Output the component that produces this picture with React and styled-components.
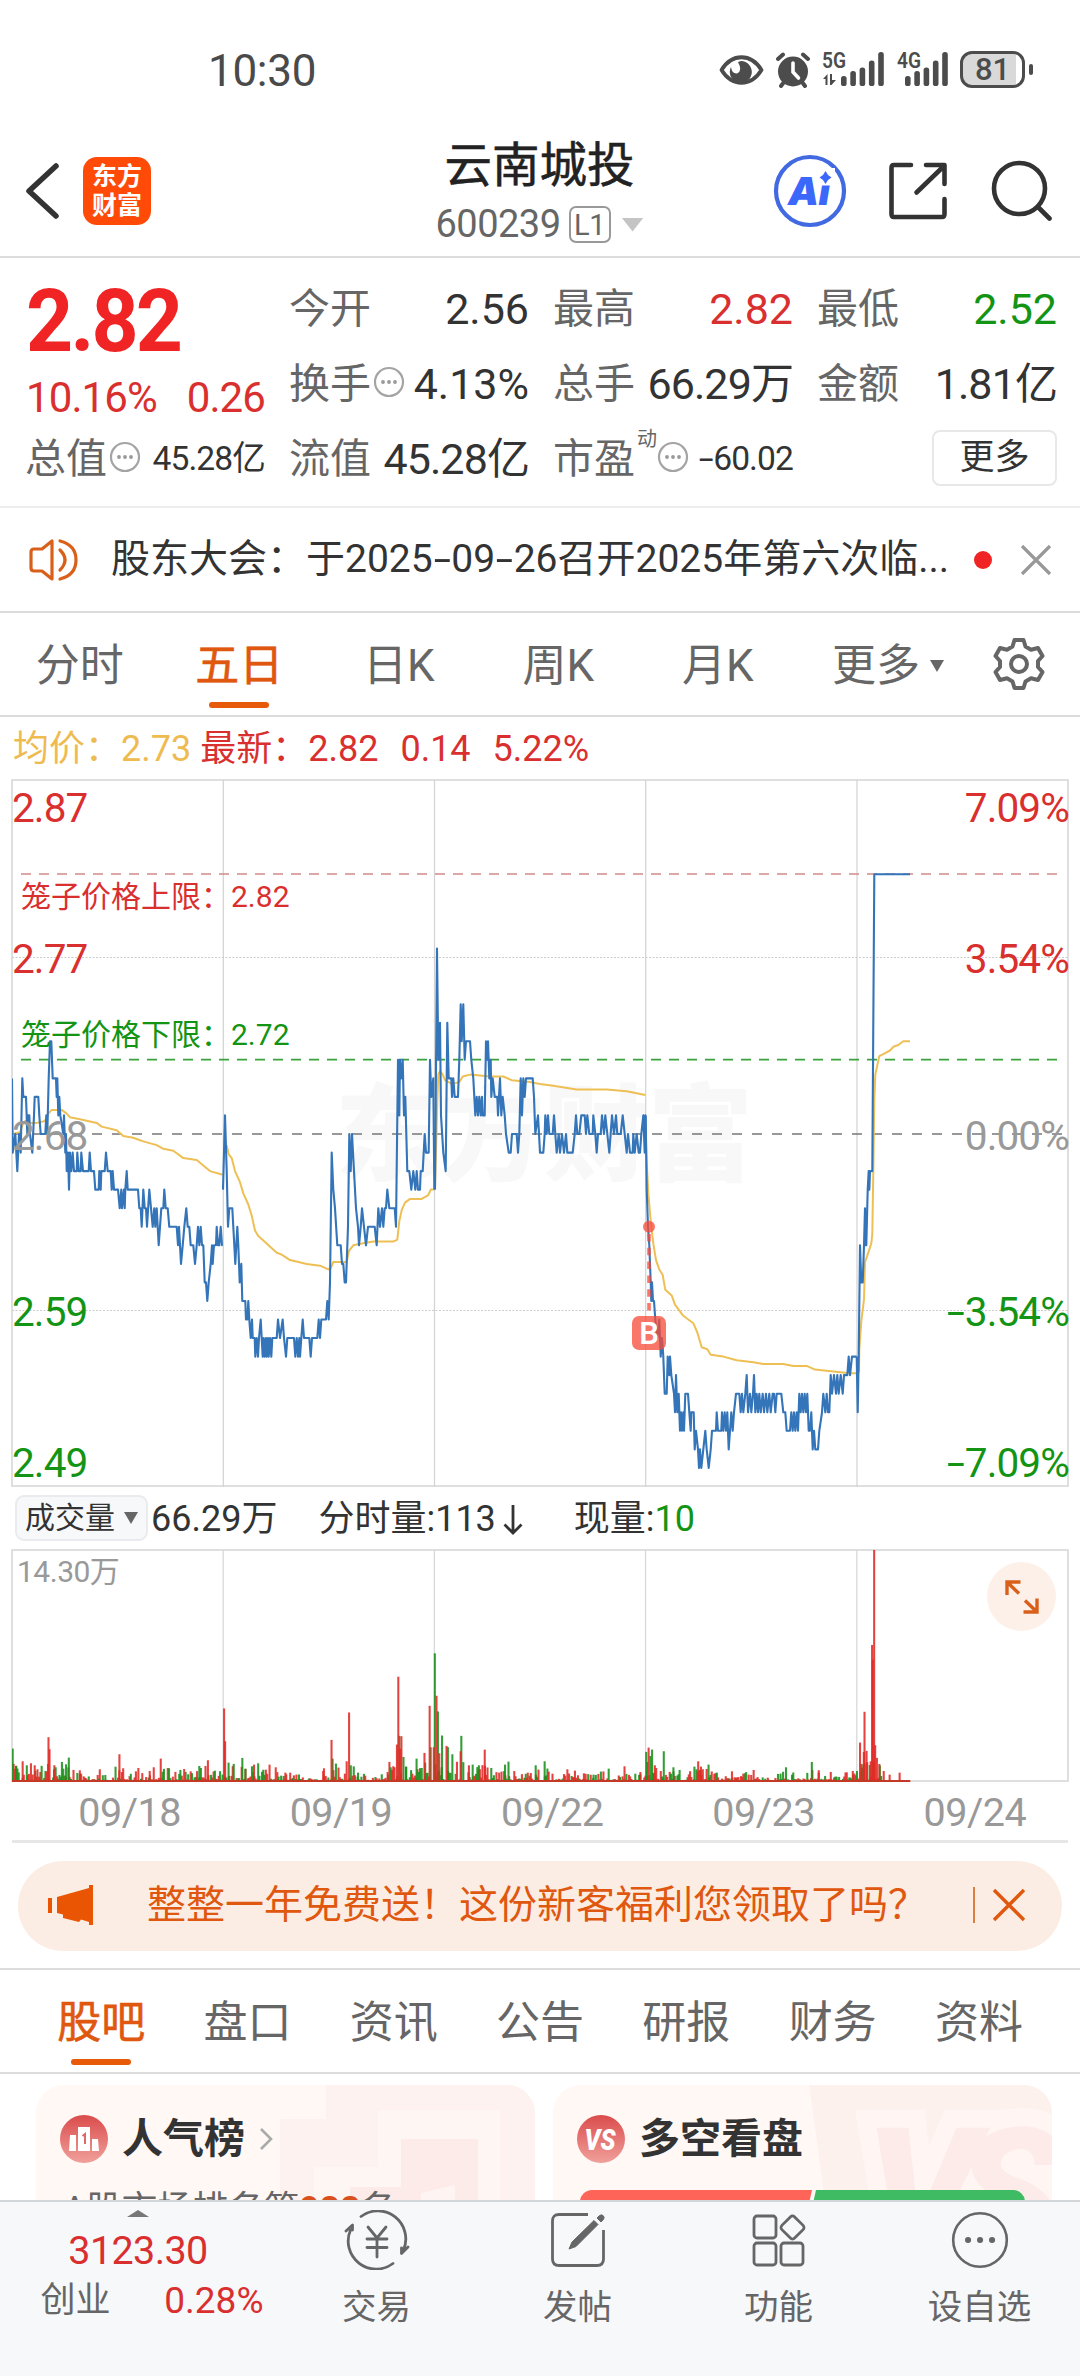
import React from 'react';
import styled, { createGlobalStyle } from 'styled-components';

const RED = '#d9302f';
const GREEN = '#149414';
const ORANGE = '#e0580f';
const TEXT = '#333333';
const GREY = '#666666';

/* Price chart: x in thirds of a pixel, y in cents above the 2.68 close */
const CENT = 18.55;
const ZERO_Y = 354;
const SESSIONS = [
	{
		origin: 0,
		price:
			'36,3 38,-1 46,0 52,-2 57,0 62,-1 67,3 70,2 78,2 82,0 85,1 88,1 90,0 97,-1 102,1 104,2 115,2 118,1 122,0 136,0 139,1 142,0 146,3 150,5 154,5 158,3 168,3 170,2 172,3 175,1 178,2 181,1 190,0 192,1 196,-1 198,0 200,-2 204,-1 207,-3 210,-1 214,-2 218,-1 222,-2 230,-2 232,-1 236,-2 242,-2 244,-1 249,-2 266,-2 269,-1 273,-2 282,-2 286,-3 296,-3 298,-2 302,-3 304,-2 314,-2 318,-1 323,-2 332,-2 335,-3 338,-2 342,-3 354,-3 359,-4 364,-3 366,-4 372,-3 374,-4 376,-3 380,-2 383,-3 414,-3 418,-4 422,-4 425,-5 430,-3 434,-4 438,-4 441,-5 448,-3 453,-4 458,-5 463,-4 466,-5 470,-4 476,-6 480,-5 484,-4 490,-4 493,-3 497,-4 503,-4 508,-5 530,-5 534,-6 537,-5 543,-7 548,-6 553,-5 559,-4 563,-5 568,-5 572,-6 580,-6 585,-7 590,-6 594,-5 598,-6 602,-5 606,-6 610,-6 614,-8 618,-8 622,-9 626,-8 632,-7 636,-6 638,-7 642,-6 648,-6 650,-5 654,-6 658,-6 662,-5 666,-6 668,-6',
		average:
			'36,0 60,.1 70,.6 76,.7 82,.6 110,.6 135,.7 145,1.1 155,1.3 185,1.3 200,1.1 210,.9 240,.8 290,.6 305,.4 350,.2 370,-.1 400,-.2 430,-.4 470,-.6 490,-.8 520,-.9 550,-1.3 590,-1.4 610,-1.7 630,-2 668,-2.2',
	},
	{
		origin: 0,
		price:
			'669,-3 675,1 680,-2 684,-5 688,-4 697,-4 700,-5 706,-7 712,-5 715,-6 719,-8 724,-7 727,-9 736,-9 738,-10 742,-10 745,-9 748,-10 752,-11 756,-10 758,-11 764,-11 766,-12 770,-11 774,-12 777,-11 782,-10 788,-12 791,-11 794,-12 798,-11 800,-12 804,-11 806,-12 810,-11 814,-12 817,-11 830,-11 834,-10 840,-11 848,-10 852,-11 858,-12 862,-11 882,-11 886,-12 890,-11 894,-12 898,-11 900,-12 904,-11 908,-10 912,-11 928,-11 932,-12 936,-11 952,-11 956,-10 960,-11 964,-10 978,-10 982,-9 986,-10 990,-8 995,-1 1000,-3 1005,-4 1012,-6 1022,-6 1026,-7 1030,-7 1034,-8 1038,-8 1044,-5 1048,0 1052,-2 1056,0 1062,-2 1068,-4 1074,-5 1077,-6 1082,-5 1086,-4 1092,-5 1098,-6 1104,-5 1124,-5 1130,-6 1135,-4 1140,-5 1146,-4 1150,-5 1154,-4 1158,-4 1162,-3 1168,-4 1184,-4 1188,-5 1194,4 1198,1 1200,4 1204,3 1208,4 1212,1 1216,2 1222,-2 1228,-2 1234,-3 1240,-2 1246,-3 1250,-2 1254,-3 1260,-3 1262,-2 1268,-2 1274,0 1278,-1 1286,-1 1290,4 1294,2 1300,3 1303,-3',
		average:
			'680,-.6 686,-1.1 695,-1.3 705,-2 720,-2.6 730,-3.2 745,-3.8 755,-4.4 765,-5.2 775,-5.5 800,-5.9 812,-6.1 830,-6.4 845,-6.5 870,-6.8 920,-7 960,-7.1 985,-7.3 993,-7.2 1000,-6.9 1040,-6.9 1047,-6.3 1060,-6 1085,-5.9 1120,-5.8 1180,-5.8 1192,-5.7 1198,-4.7 1205,-4.1 1215,-3.7 1230,-3.5 1265,-3.5 1285,-3.3 1292,-3 1303,-3',
	},
	{
		origin: 1140,
		price:
			'165,-3 171,10 175,4 180,6 183,1 190,-1 197,-2 202,6 206,3 214,3 216,2 220,3 224,2 234,2 238,4 242,7 245,5 250,7 254,4 258,5 270,5 274,4 280,3 286,1 290,2 294,1 298,2 302,1 306,2 308,1 314,1 318,5 321,4 324,5 328,3 332,4 334,2 338,3 344,2 352,2 354,1 360,3 364,1 368,2 374,1 378,0 386,-1 392,-1 396,0 410,0 414,-1 418,0 422,3 426,1 430,3 434,2 438,3 458,3 462,2 466,0 474,1 480,-1 490,-1 494,0 496,1 500,0 504,1 508,0 518,0 522,1 526,0 530,-1 536,0 540,-1 546,0 552,-1 558,0 562,-1 578,-1 584,0 588,1 592,0 598,0 604,1 614,1 618,0 622,1 628,0 638,0 640,1 646,0 650,-1 654,0 662,0 666,1 672,0 676,1 682,0 688,-1 696,1 702,0 708,1 712,0 722,0 728,1 734,0 740,-1 744,0 750,-1 758,-1 760,0 764,-1 770,0 776,-1 780,-1 784,0 790,1 794,-1 796,1 797,-1',
		average:
			'165,-3 172,1.8 175,3.2 180,3.4 188,3.2 195,2.9 215,2.7 238,2.8 248,3.1 270,3.2 330,3.1 370,3.1 395,2.9 450,2.8 480,2.7 520,2.6 590,2.4 680,2.4 740,2.3 796,2.1',
	},
	{
		origin: 1860,
		price:
			'77,1 80,-3 84,-5 88,-6 92,-8 94,-9 96,-8 99,-9 102,-9 106,-10 112,-11 118,-10 122,-12 126,-11 130,-12 134,-14 140,-14 143,-12 148,-13 150,-12 154,-13 162,-14 165,-15 168,-13 172,-15 176,-14 180,-16 183,-15 186,-16 190,-15 192,-16 196,-14 204,-14 208,-15 212,-16 214,-15 221,-15 224,-17 228,-16 234,-17 237,-18 240,-17 244,-18 250,-17 256,-16 260,-17 266,-18 272,-17 276,-16 288,-16 290,-15 294,-16 304,-16 306,-15 310,-16 314,-15 318,-16 322,-15 326,-17 330,-16 334,-15 338,-16 342,-15 348,-14 358,-14 362,-15 366,-14 370,-15 376,-14 380,-13 384,-15 390,-14 394,-15 399,-14 402,-13 406,-15 410,-14 414,-15 418,-14 422,-15 428,-14 432,-15 438,-14 442,-15 448,-14 452,-15 458,-14 462,-14 466,-15 470,-14 484,-14 490,-15 496,-15 500,-16 510,-16 514,-15 518,-16 522,-15 526,-16 530,-15 534,-16 538,-14 542,-15 546,-14 550,-15 554,-14 558,-15 562,-14 566,-16 570,-16 574,-15 578,-17 582,-16 586,-17 594,-17 598,-16 606,-15 610,-14 616,-15 620,-14 624,-15 628,-15 632,-13 636,-14 642,-13 648,-14 652,-13 656,-14 662,-13 668,-14 672,-13 682,-13 686,-12 690,-13 696,-12 710,-12',
		average:
			'77,0 80,-1.5 85,-3.2 92,-4.7 100,-5.9 108,-6.8 118,-7.3 128,-7.6 136,-8.4 155,-8.7 165,-9.2 190,-9.8 220,-10.2 232,-10.7 245,-11.5 262,-11.6 272,-11.9 310,-12 350,-12.2 400,-12.3 430,-12.4 490,-12.4 520,-12.5 560,-12.5 585,-12.7 640,-12.8 690,-12.9 710,-12.9',
	},
	{
		origin: 1860,
		price:
			'710,-12 713,-15 716,-12 720,-6 724,-8 728,-8 732,-6 735,-4 737,-6 739,-6 743,-3 746,-2 748,-3 750,-2 757,-2 760,6 763,14 870,14',
		average:
			'710,-12.9 717,-12.8 718,-11.6 724,-10.1 732,-8.9 735,-6.9 745,-6.4 754,-5.9 757,-5.4 760,-2 763,1.8 766,3.2 772,3.7 778,4.2 790,4.3 810,4.5 820,4.7 835,4.8 850,5 870,5',
	},
];

const toPoints = (series, origin) =>
	series
		.split(' ')
		.map((pair) => pair.split(',').map(Number))
		.map(([x, cents]) => `${((x + origin) / 3 - 12).toFixed(1)},${(ZERO_Y - cents * CENT).toFixed(1)}`)
		.join(' ');

const DAY_LINES = [211.3, 422.5, 633.7, 845];

/* Volume spikes, "x,height" on a 3067 x 694 grid starting at x = 35 */
const UP =
	'66,62 90,56 101,50 109,38 141,134 144,98 157,38 232,35 290,38 347,83 402,42 435,33 467,70 535,39 597,48 604,65 651,220 654,122 738,52 783,52 801,44 829,28 843,28 941,41 963,126 1007,62 1014,208 1126,30 1153,112 1157,315 1166,137 1163,100 1233,87 1248,228 1260,104 1268,258 1276,86 1297,108 1338,92 1362,50 1408,97 1450,28 1533,28 1648,38 1670,34 1696,26 1814,47 1860,30 1884,103 1902,50 1906,42 2028,62 2036,46 2032,36 2126,32 2159,25 2189,36 2378,28 2413,30 2477,33 2498,118 2509,90 2511,210 2517,93 2529,62 2533,410 2535,366 2539,694 2542,110 2547,72 2554,54 2584,22 2613,28';
const DOWN =
	'37,100 47,48 78,50 180,60 192,53 200,73 524,36 579,48 664,58 679,54 704,72 713,40 732,47 750,56 966,70 1019,50 1040,28 1160,138 1172,75 1180,45 1210,70 1225,42 1235,58 1251,104 1263,385 1272,211 1284,139 1301,104 1314,83 1340,138 1373,52 1391,50 1427,42 1467,52 1477,61 1556,50 1582,62 1724,22 1768,40 1877,90 1880,60 1889,78 1894,97 1928,92 1956,44 1974,36 2017,46 2058,52 2283,44 2358,60 2502,54';

const parseBars = (list, up) =>
	list.split(' ').map((pair) => {
		const [x, h] = pair.split(',').map(Number);
		return { x, h, up };
	});

const spikes = [...parseBars(DOWN, false), ...parseBars(UP, true)];

// small trades between the spikes, livelier right after one
const smallTrades = () => {
	const bars = [];
	let seed = 41;
	const next = () => {
		seed = (seed * 16807) % 2147483647;
		return seed / 2147483647;
	};
	for (let x = 36; x < 2570; x += 3.7) {
		const near = spikes.reduce((sum, s) => (Math.abs(s.x - x) < 26 ? Math.max(sum, s.h) : sum), 0);
		bars.push({ x, h: 5 + Math.pow(next(), 2.4) * (10 + Math.min(near, 110) * 0.42), up: next() > 0.38 });
	}
	return bars;
};
const volumeBars = [...smallTrades(), ...spikes];

const dates = ['09/18', '09/19', '09/22', '09/23', '09/24'];
const infoTabs = ['股吧', '盘口', '资讯', '公告', '研报', '财务', '资料'];
const axisLabels = [
	{ y: 27, left: '2.87', right: '7.09%', color: RED },
	{ y: 178, left: '2.77', right: '3.54%', color: RED },
	{ y: 354.5, left: '2.68', right: '0.00%', color: '#999' },
	{ y: 531, left: '2.59', right: '3.54%', minus: true, color: GREEN },
	{ y: 681.5, left: '2.49', right: '7.09%', minus: true, color: GREEN },
];

const Signal = ({ name, width, first, data }) => (
	<svg width={width} height="38" viewBox={`0 0 ${width} 38`} fill="#4c4c4c" overflow="visible">
		<text x="0" y="18" fontSize="21.5" fontWeight="600" textLength="24" lengthAdjust="spacingAndGlyphs">
			{name}
		</text>
		{data && <path d="M1 29 L5.5 24 V35 H3.5 V29 Z M8 24 H10 V30 H14 L9.5 35 H8 Z" />}
		{[10, 15, 18.5, 25.5, 34].map((h, i) => (
			<rect key={h} x={first + i * 9.3} y={36 - h} width="5.6" height={h} rx="2.6" />
		))}
	</svg>
);

const StatusIcons = () => (
	<StatusRight>
		<svg width="45" height="38" viewBox="0 0 45 38">
			<path d="M2.5 20 C13 3 32 3 42.5 20 C32 37 13 37 2.5 20 Z" fill="none" stroke="#4c4c4c" strokeWidth="3.8" strokeLinejoin="round" />
			<path d="M22 11 A11 11 0 1 1 12 17 Q13 24 18 23.5 Q24 21 19 12 Z" fill="#4c4c4c" />
		</svg>
		<svg width="34" height="38" viewBox="0 0 34 38">
			<circle cx="17" cy="21.5" r="15" fill="#4c4c4c" />
			<path d="M2 9 L7 4.5 M32 9 L27 4.5 M8 32 L5 36 M26 32 L29 36" stroke="#4c4c4c" strokeWidth="4" strokeLinecap="round" />
			<path d="M17 13 V22 L22.5 28" fill="none" stroke="#fff" strokeWidth="3.6" strokeLinecap="round" />
		</svg>
		<Signal name="5G" width={63} first={19} data />
		<Signal name="4G" width={51} first={8} />
		<Battery>
			<b>81</b>
		</Battery>
	</StatusRight>
);

const More = () => (
	<svg width="32" height="32" viewBox="0 0 32 32">
		<circle cx="16" cy="16" r="14" fill="none" stroke="#a4a4a4" strokeWidth="2.2" />
		<circle cx="10" cy="16" r="1.9" fill="#999" />
		<circle cx="16" cy="16" r="1.9" fill="#999" />
		<circle cx="22" cy="16" r="1.9" fill="#999" />
	</svg>
);

const PriceChart = () => (
	<ChartFrame height={708}>
		<svg width="1056" height="708" viewBox="0 0 1056 708">
			<text x="323" y="392" fontSize="105" fontWeight="900" fill="#f8f8f8" textLength="418">
				东方财富
			</text>
			{DAY_LINES.map((x) => (
				<line key={x} x1={x} x2={x} y1="0" y2="707" stroke="#d2d2d2" strokeWidth="1.2" />
			))}
			<path d="M0 177.5 H1056 M0 530.5 H1056" stroke="#ccc" strokeWidth="1" strokeDasharray="2 1.5" />
			<line x1="9" x2="1048" y1="94" y2="94" stroke="#d08a8a" strokeWidth="1.6" strokeDasharray="10 8" />
			<line x1="9" x2="1048" y1="279.6" y2="279.6" stroke="#3ba23b" strokeWidth="1.6" strokeDasharray="10 8" />
			<line x1="0" x2="1056" y1="354" y2="354" stroke="#777" strokeWidth="1.6" strokeDasharray="10 10" />
			{SESSIONS.map((s) => (
				<polyline key={s.average} points={toPoints(s.average, s.origin)} fill="none" stroke="#eebf55" strokeWidth="2" strokeLinejoin="round" />
			))}
			{SESSIONS.map((s) => (
				<polyline key={s.price} points={toPoints(s.price, s.origin)} fill="none" stroke="#3474b8" strokeWidth="2.1" strokeLinejoin="round" />
			))}
			<g fill="#f84a38" opacity="0.75">
				<circle cx="637" cy="446.7" r="6" />
				<line x1="637" x2="637" y1="454" y2="536" stroke="#f84a38" strokeWidth="3.6" strokeDasharray="7.5 6.3" />
				<rect x="620" y="536" width="34" height="34" rx="7" />
			</g>
			<text x="637" y="564" fontSize="31" fontWeight="600" fill="#fff" textAnchor="middle">
				B
			</text>
		</svg>
		<CageLabel y={116} color={RED}>
			笼子价格上限：2.82
		</CageLabel>
		<CageLabel y={254} color={GREEN}>
			笼子价格下限：2.72
		</CageLabel>
		{axisLabels.map((l) => (
			<AxisRow key={l.left} y={l.y} color={l.color}>
				<span>{l.left}</span>
				<span>
					{l.minus && <Dash>-</Dash>}
					{l.right}
				</span>
			</AxisRow>
		))}
	</ChartFrame>
);

const VolumeChart = () => (
	<ChartFrame height={233}>
		<svg width="1056" height="232" viewBox="35 0 3067 694" preserveAspectRatio="none">
			{DAY_LINES.map((x) => (
				<rect key={x} x={35 + x * 2.904 - 2} y="0" width="3.5" height="694" fill="#d6d6d6" />
			))}
			{volumeBars.map((b, i) => (
				<rect key={i} x={b.x - 3} y={694 - b.h} width="6" height={b.h} fill={b.up ? '#e02a26' : '#18901a'} opacity="0.88" />
			))}
			<rect x="35" y="688" width="2609" height="6" fill="#c23a26" />
		</svg>
		<VolumeMax>14.30万</VolumeMax>
		<Expand>
			<svg width="34" height="34" viewBox="0 0 34 34" fill="none" stroke="#d9601a" strokeWidth="3.4">
				<path d="M15.5 2 H2 V15 M2 2 L14 13.5 M18.5 32 H32 V18.5 M32 32 L20 20.5" />
			</svg>
		</Expand>
	</ChartFrame>
);

const App = () => (
	<Page>
		<GlobalStyle />
		<StatusBar>
			<Clock>10:30</Clock>
			<StatusIcons />
		</StatusBar>

		<Header>
			<HeaderSide>
				<svg width="36" height="58" viewBox="0 0 36 58">
					<path d="M32 4 L5 29 L32 54" fill="none" stroke="#333" strokeWidth="5.5" strokeLinecap="round" strokeLinejoin="round" />
				</svg>
				<Logo>
					<span>东方</span>
					<span>财富</span>
				</Logo>
			</HeaderSide>
			<Heading>
				<h1>云南城投</h1>
				<Code>
					600239<Level>L1</Level>
					<Triangle w={22} h={14} color="#c4c4c4" />
				</Code>
			</Heading>
			<HeaderSide end>
				<svg width="74" height="74" viewBox="0 0 74 74">
					<circle cx="37" cy="37" r="34" fill="#fff" stroke="#4169e1" strokeWidth="4.2" />
					<text x="15" y="51" fontSize="39" fontWeight="900" fontStyle="italic" fill="#3b67fb" fontFamily="Inter" textLength="42">
						Ai
					</text>
					<path d="M44 14 H62 V31.5 H44 Z" fill="#fff" />
					<path d="M52.5 17 L55 21 L58.5 23.5 L55 26 L52.5 30 L50 26 L46.5 23.5 L50 21 Z" fill="#3b67fb" />
				</svg>
				<svg width="62" height="62" viewBox="0 0 62 62" fill="none" stroke="#333" strokeWidth="4.6" strokeLinecap="round" strokeLinejoin="round">
					<path d="M24 5 H7 Q4.5 5 4.5 8 V54 Q4.5 57 7 57 H55 Q57.5 57 57.5 54 V39 M39 5 H57.5 V24 M57 6 L29.5 32.5" />
				</svg>
				<svg width="62" height="62" viewBox="0 0 62 62" fill="none" stroke="#333" strokeWidth="4.6" strokeLinecap="round">
					<circle cx="29.5" cy="28.5" r="25.5" />
					<path d="M48 47 L59.5 58.5" />
				</svg>
			</HeaderSide>
		</Header>

		<Quote>
			<Summary>
				<Price>2.82</Price>
				<Change>
					<span>10.16%</span>
					<span>0.26</span>
				</Change>
			</Summary>
			<Cell>
				<label>今开</label>
				<Value>2.56</Value>
			</Cell>
			<Cell>
				<label>最高</label>
				<Value color={RED}>2.82</Value>
			</Cell>
			<Cell>
				<label>最低</label>
				<Value color={GREEN}>2.52</Value>
			</Cell>
			<Cell>
				<label>换手</label>
				<More />
				<Value>4.13%</Value>
			</Cell>
			<Cell>
				<label>总手</label>
				<Value tight>66.29万</Value>
			</Cell>
			<Cell>
				<label>金额</label>
				<Value tight>1.81亿</Value>
			</Cell>
			<Cell>
				<label>总值</label>
				<More />
				<Value small>45.28亿</Value>
			</Cell>
			<Cell>
				<label>流值</label>
				<Value tight>45.28亿</Value>
			</Cell>
			<Cell>
				<label>市盈</label>
				<sup>动</sup>
				<More />
				<Value small>
					<Dash>-</Dash>60.02
				</Value>
			</Cell>
			<Cell>
				<MoreButton>更多</MoreButton>
			</Cell>
		</Quote>

		<Notice>
			<svg width="52" height="46" viewBox="0 0 52 46" fill="none" stroke="#d9601a" strokeWidth="3.2" strokeLinejoin="round" strokeLinecap="round">
				<path d="M24 4 V42 L14 34 H6 Q3 34 3 31 V15 Q3 12 6 12 H14 Z M32 13 Q42 23 32 33 M32 4 Q48 8 48 23 Q48 38 32 42" />
			</svg>
			<p>
				股东大会：于2025<Dash>-</Dash>09<Dash>-</Dash>26召开2025年第六次临...
			</p>
			<Dot />
			<svg width="32" height="32" viewBox="0 0 32 32">
				<path d="M2 2 L30 30 M30 2 L2 30" stroke="#999" strokeWidth="3.2" />
			</svg>
		</Notice>

		<PeriodTabs>
			<Tab>分时</Tab>
			<Tab active>五日</Tab>
			<Tab>日K</Tab>
			<Tab>周K</Tab>
			<Tab>月K</Tab>
			<Tab wide>
				更多
				<Triangle w={14} h={12} color="#666" />
			</Tab>
			<svg width="54" height="54" viewBox="0 0 54 54" fill="none" stroke="#666" strokeWidth="4" strokeLinejoin="round">
				<path d="M22.5 3 H31.5 L33.5 9.5 L39 12.7 L46 11 L50.5 19 L46 24 V30 L50.5 35 L46 43 L39 41.3 L33.5 44.5 L31.5 51 H22.5 L20.5 44.5 L15 41.3 L8 43 L3.5 35 L8 30 V24 L3.5 19 L8 11 L15 12.7 L20.5 9.5 Z" />
				<circle cx="27" cy="27" r="8" />
			</svg>
		</PeriodTabs>

		<Averages>
			<span>均价：2.73</span>
			<b>最新：2.82</b>
			<b>0.14</b>
			<b>5.22%</b>
		</Averages>

		<PriceChart />

		<VolumeInfo>
			<VolumeSelect>
				成交量
				<Triangle w={14} h={12} color="#666" />
			</VolumeSelect>
			<span>66.29万</span>
			<span>
				分时量:113
				<svg width="20" height="30" viewBox="0 0 20 30" fill="none" stroke="#333" strokeWidth="2.8">
					<path d="M10 0 V28 M1.5 19.5 L10 28 L18.5 19.5" />
				</svg>
			</span>
			<span>
				现量:<em>10</em>
			</span>
		</VolumeInfo>

		<VolumeChart />

		<Dates>
			{dates.map((d) => (
				<span key={d}>{d}</span>
			))}
		</Dates>

		<Banner>
			<svg width="46" height="40" viewBox="0 0 46 40" fill="#ea5504">
				<path d="M0 13 H4 V28 H0 Z M9 12 L41 3 V0 H45 V40 H41 V37 L33 34.5 L31 37 L15 33 V29.5 L9 28 Z" />
			</svg>
			<p>整整一年免费送！这份新客福利您领取了吗？</p>
			<hr />
			<svg width="34" height="34" viewBox="0 0 34 34">
				<path d="M2 2 L32 32 M32 2 L2 32" stroke="#e0580f" strokeWidth="3.4" />
			</svg>
		</Banner>

		<InfoTabs>
			{infoTabs.map((t, i) => (
				<Tab key={t} narrow active={i === 0}>
					{t}
				</Tab>
			))}
		</InfoTabs>

		<Cards>
			<Card>
				<Decor width="499" height="116" viewBox="0 0 499 116">
					<path d="M290 0 H499 V116 H244 V34 H290 Z" fill="#fdf2ef" />
					<path d="M342 25 H464 V116 H278 V82 H342 Z" fill="#fef6f3" />
					<path d="M365 54 H442 V116 H314 V102 H365 Z" fill="#fcebe8" />
					<path d="M385 108 L419 100 V116 H385 Z" fill="#fef4f1" />
				</Decor>
				<CardTitle>
					<svg width="48" height="48" viewBox="0 0 48 48">
						<defs>
							<linearGradient id="badge" x1="0" y1="0" x2="0" y2="1">
								<stop offset="0" stopColor="#da4c4c" />
								<stop offset="1" stopColor="#f0a09b" />
							</linearGradient>
						</defs>
						<circle cx="24" cy="24" r="24" fill="url(#badge)" />
						<path d="M10 20 H16 V36 H9 Z M18 12 H30 V36 H18 Z M32 24 H38 L39 36 H32 Z" fill="#fff" />
						<path d="M22.5 21 L25 19 V29" fill="none" stroke="#dc6a68" strokeWidth="2" />
					</svg>
					<h2>人气榜</h2>
					<svg width="16" height="26" viewBox="0 0 16 26">
						<path d="M2 3 L12 13 L2 23" fill="none" stroke="#aaa" strokeWidth="2.6" />
					</svg>
				</CardTitle>
				<Rank>
					A股市场排名第<b>988</b>名
				</Rank>
			</Card>
			<Card>
				<Decor width="499" height="116" viewBox="0 0 499 116">
					<path d="M256 0 H499 V116 H272 Z" fill="#fdf1ee" />
					<text x="312" y="168" fontSize="176" fontWeight="900" fontStyle="italic" letterSpacing="-22" fill="#fcebe8" stroke="#fff6f3" strokeWidth="36" paintOrder="stroke">
						VS
					</text>
				</Decor>
				<CardTitle>
					<svg width="48" height="48" viewBox="0 0 48 48">
						<circle cx="24" cy="24" r="24" fill="url(#badge)" />
						<text x="23" y="35" fontSize="30" fontWeight="900" fontStyle="italic" fill="#fff" textAnchor="middle" textLength="31" lengthAdjust="spacingAndGlyphs">
							VS
						</text>
					</svg>
					<h2>多空看盘</h2>
				</CardTitle>
				<Versus>
					<span />
					<span />
				</Versus>
			</Card>
		</Cards>

		<BottomNav>
			<IndexBox>
				<Triangle w={22} h={7} color="#777" up />
				<strong>3123.30</strong>
				<div>
					<span>创业</span>
					<em>0.28%</em>
				</div>
			</IndexBox>
			<NavItem>
				<svg width="66" height="60" viewBox="0 0 66 60" fill="none" stroke="#666" strokeWidth="2.8" strokeLinecap="round" strokeLinejoin="round">
					<path d="M17 6.5 A28 28 0 0 1 59.5 40 M64 37 L57.5 43.5 L57.5 38 M49 53.5 A28 28 0 0 1 6.5 20 M2 21 L8.5 15 V20" />
					<path d="M24 17 L33 28 L42 17 M23 29 H43 M23 37.5 H43 M33 28 V47" />
				</svg>
				交易
			</NavItem>
			<NavItem>
				<svg width="60" height="60" viewBox="0 0 60 60" fill="none" stroke="#666" strokeWidth="2.8">
					<path d="M40 4.5 H11 Q4.5 4.5 4.5 11 V49 Q4.5 55.5 11 55.5 H49 Q55.5 55.5 55.5 49 V20" />
					<path d="M21 39 L24 32 L46 10.5 L50 14.5 L28 36.5 Z M49 8 L51.5 5.5 Q54 4 55.5 6 Q57 8 55 10 L53 12 Z" fill="#666" strokeWidth="1" />
				</svg>
				发帖
			</NavItem>
			<NavItem>
				<svg width="60" height="60" viewBox="0 0 60 60" fill="none" stroke="#666" strokeWidth="2.8">
					<rect x="5" y="6" width="22" height="22" rx="3" />
					<rect x="5" y="33" width="22" height="22" rx="3" />
					<rect x="32" y="33" width="22" height="22" rx="3" />
					<rect x="34.5" y="8.5" width="18" height="18" rx="3" transform="rotate(45 43.5 17.5)" />
				</svg>
				功能
			</NavItem>
			<NavItem>
				<svg width="60" height="60" viewBox="0 0 60 60" fill="none" stroke="#666" strokeWidth="2.6">
					<circle cx="30" cy="30" r="26.8" />
					<path d="M18 30 H18.1 M30 30 H30.1 M42 30 H42.1" strokeWidth="6" strokeLinecap="round" />
				</svg>
				设自选
			</NavItem>
		</BottomNav>
	</Page>
);

export default App;

const GlobalStyle = createGlobalStyle`
	* {
		box-sizing: border-box;
		margin: 0;
		padding: 0;
	}

	body {
		background-color: #fff;
		color: ${TEXT};
		font-family: Roboto, 'Noto Sans CJK SC', sans-serif;
		line-height: 1.2;
	}

	svg {
		display: block;
		flex-shrink: 0;
	}

	em,
	i {
		font-style: normal;
	}
`;

const Page = styled.div`
	width: 1080px;
	height: 2376px;
	display: flex;
	flex-direction: column;
	overflow: hidden;
	white-space: nowrap;
`;

const StatusBar = styled.div`
	height: 126px;
	padding: 14px 47px 0 208px;
	display: flex;
	align-items: center;
	justify-content: space-between;
	flex-shrink: 0;
`;

const Clock = styled.div`
	margin-top: 3px;
	font-size: 44px;
	letter-spacing: -0.3px;
	color: #4a4a4a;
`;

const StatusRight = styled.div`
	display: flex;
	align-items: center;
	gap: 12px;
	margin-top: -2px;
`;

const Battery = styled.div`
	width: 65px;
	height: 37px;
	margin-right: 8px;
	border: 3px solid #4c4c4c;
	border-radius: 12px;
	background: linear-gradient(90deg, #d9d9d9 53px, #fff 53px);
	display: flex;
	align-items: center;
	justify-content: center;
	position: relative;

	b {
		font-size: 31px;
		font-weight: 500;
		line-height: 1;
		color: #4c4c4c;
	}

	&::after {
		content: '';
		position: absolute;
		right: -11px;
		width: 4px;
		height: 11px;
		border-radius: 2px;
		background: #4c4c4c;
	}
`;

const Header = styled.header`
	height: 132px;
	padding: 0 28px 0 24px;
	border-bottom: 2px solid #dcdcdc;
	display: grid;
	grid-template-columns: 1fr 220px 1fr;
	align-items: center;
	flex-shrink: 0;
`;

const HeaderSide = styled.div`
	display: flex;
	align-items: center;
	justify-content: ${({ end }) => (end ? 'flex-end' : 'flex-start')};
	gap: ${({ end }) => (end ? '41px' : '23px')};

	svg:first-child {
		margin-right: ${({ end }) => (end ? '-1px' : 0)};
	}
`;

const Logo = styled.div`
	width: 68px;
	height: 68px;
	border-radius: 14px;
	background: #ff4a08;
	color: #fff;
	font-size: 25px;
	font-weight: 700;
	line-height: 29px;
	display: flex;
	flex-direction: column;
	align-items: center;
	justify-content: center;
`;

const Heading = styled.div`
	padding-top: 7px;
	margin-left: 3px;
	display: flex;
	flex-direction: column;
	align-items: center;

	h1 {
		font-size: 47.5px;
		font-weight: 400;
		line-height: 60px;
		color: #222;
		-webkit-text-stroke: 0.5px #222;
	}
`;

const Code = styled.div`
	height: 58px;
	display: flex;
	align-items: center;
	font-size: 38px;
	letter-spacing: -0.5px;
	color: ${GREY};
	gap: 8px;
`;

const Level = styled.span`
	width: 42px;
	height: 37px;
	margin-right: 3px;
	border: 2px solid #999;
	border-radius: 7px;
	font-size: 29px;
	line-height: 34px;
	text-align: center;
`;

const Triangle = styled.i`
	width: ${({ w }) => w}px;
	height: ${({ h }) => h}px;
	background: ${({ color }) => color};
	clip-path: ${({ up }) => (up ? 'polygon(50% 0, 100% 100%, 0 100%)' : 'polygon(0 0, 100% 0, 50% 100%)')};
`;

const Quote = styled.section`
	height: 250px;
	padding: 14px 24px 0 26px;
	border-bottom: 2px solid #ededed;
	display: grid;
	grid-template-columns: repeat(4, 239px);
	grid-template-rows: repeat(3, 75px);
	column-gap: 25px;
	flex-shrink: 0;
`;

const Summary = styled.div`
	grid-row: span 2;
	display: flex;
	flex-direction: column;
	color: ${RED};
`;

const Price = styled.strong`
	width: 170px;
	font-size: 88px;
	font-weight: 700;
	line-height: 98px;
	letter-spacing: -3px;
	color: #f02424;
	transform: scaleX(0.935);
	transform-origin: left;
`;

const Change = styled.div`
	display: flex;
	justify-content: space-between;
	font-size: 42px;
	line-height: 56px;
	letter-spacing: -0.9px;
`;

const Cell = styled.div`
	display: flex;
	align-items: center;

	label {
		margin-left: -1px;
		font-size: 41px;
		color: ${GREY};
	}

	svg {
		margin-left: 2px;
		margin-top: -5px;
	}

	sup {
		align-self: flex-start;
		margin: 5px 0 0 2px;
		font-size: 20px;
		line-height: 24px;
		color: ${GREY};
	}

	sup + svg {
		margin-left: 0;
	}
`;

const Value = styled.span`
	margin-left: auto;
	font-size: ${({ small }) => (small ? '33.6px' : '43px')};
	letter-spacing: ${({ tight, small }) => (tight || small ? '-0.9px' : 0)};
	color: ${({ color }) => color || TEXT};
`;

const Dash = styled.span`
	display: inline-block;
	padding: 0 0.1em;
	transform: scaleX(1.6);
`;

const MoreButton = styled.button`
	width: 125px;
	height: 56px;
	margin-left: auto;
	margin-top: -4px;
	border: 2px solid #e8e8e8;
	border-radius: 8px;
	background: #fff;
	color: ${TEXT};
	font: inherit;
	font-size: 35px;
	line-height: 50px;
`;

const Notice = styled.section`
	height: 105px;
	padding: 0 28px 0 28px;
	border-bottom: 2px solid #dcdcdc;
	display: flex;
	align-items: center;
	flex-shrink: 0;

	p {
		width: 840px;
		margin-left: 31px;
		font-size: 39px;
	}
`;

const Dot = styled.span`
	width: 18px;
	height: 18px;
	margin-left: auto;
	margin-right: 28px;
	border-radius: 50%;
	background: #f02424;
`;

const PeriodTabs = styled.nav`
	height: 104px;
	border-bottom: 2px solid #dcdcdc;
	display: flex;
	align-items: center;
	flex-shrink: 0;

	svg {
		margin-left: 13px;
	}
`;

const Tab = styled.div`
	width: ${({ wide, narrow }) => (wide ? '181px' : narrow ? '146.3px' : '159.5px')};
	height: 102px;
	padding-top: 4px;
	display: flex;
	align-items: center;
	justify-content: center;
	gap: 10px;
	font-size: 44px;
	color: ${({ active }) => (active ? ORANGE : GREY)};
	-webkit-text-stroke: ${({ active }) => (active ? '0.6px' : 0)};
	position: relative;

	&::after {
		content: '';
		display: ${({ active }) => (active ? 'block' : 'none')};
		position: absolute;
		bottom: 7px;
		width: 60px;
		height: 6px;
		border-radius: 3px;
		background: #e65a0a;
	}
`;

const Averages = styled.div`
	height: 62px;
	padding: 4px 0 0 13px;
	display: flex;
	align-items: center;
	font-size: 36px;
	color: #eebb50;
	flex-shrink: 0;

	b {
		margin-left: 22px;
		font-weight: 400;
		color: ${RED};
	}

	span + b {
		margin-left: 9px;
	}
`;

const ChartFrame = styled.div`
	width: 1058px;
	height: ${({ height }) => height}px;
	margin-left: 11px;
	border: 2px solid #dfdfdf;
	position: relative;
	flex-shrink: 0;

	> svg {
		margin: -1px;
	}
`;

const CageLabel = styled.span`
	position: absolute;
	left: 8px;
	top: ${({ y }) => y - 20}px;
	line-height: 40px;
	font-size: 30px;
	color: ${({ color }) => color};
`;

const AxisRow = styled.div`
	position: absolute;
	left: -1px;
	right: -2px;
	top: ${({ y }) => y - 24}px;
	display: flex;
	justify-content: space-between;
	font-size: 40.5px;
	line-height: 48px;
	letter-spacing: -0.9px;
	color: ${({ color }) => color};
`;

const VolumeInfo = styled.div`
	height: 62px;
	padding-left: 15px;
	display: flex;
	align-items: center;
	font-size: 36px;
	flex-shrink: 0;

	> span {
		display: flex;
		align-items: center;
		margin-top: 3px;
		margin-left: 49px;
	}

	> div + span {
		margin-left: 3px;
	}

	> div + span + span {
		margin-left: 41px;
	}

	> div + span + span + span {
		margin-left: 49px;
	}

	svg {
		margin-left: 7px;
		margin-right: 2px;
	}

	em {
		color: ${GREEN};
	}
`;

const VolumeSelect = styled.div`
	width: 133px;
	height: 46px;
	border: 2px solid #e9ebee;
	border-radius: 9px;
	background: #f7f8fa;
	display: flex;
	align-items: center;
	justify-content: center;
	gap: 9px;
	font-size: 30px;
`;

const VolumeMax = styled.span`
	position: absolute;
	left: 4px;
	top: 1px;
	font-size: 30px;
	line-height: 40px;
	letter-spacing: -0.5px;
	color: #999;
`;

const Expand = styled.div`
	position: absolute;
	top: 11px;
	right: 11px;
	width: 69px;
	height: 69px;
	border-radius: 50%;
	background: #fdf0e9;
	display: flex;
	align-items: center;
	justify-content: center;
`;

const Dates = styled.div`
	width: 1056px;
	height: 61px;
	margin-left: 12px;
	padding: 3px 0 0 12px;
	border-bottom: 3px solid #e6e6e6;
	display: flex;
	align-items: center;
	font-size: 39.5px;
	letter-spacing: -0.5px;
	color: #999;
	flex-shrink: 0;

	span {
		width: 211.3px;
		text-align: center;
		flex-shrink: 0;
	}
`;

const Banner = styled.section`
	width: 1044px;
	height: 90px;
	margin: 18px 0 17px 18px;
	padding: 0 36px 3px 30px;
	border-radius: 45px;
	background: #fcede4;
	color: ${ORANGE};
	display: flex;
	align-items: center;
	flex-shrink: 0;

	p {
		margin-left: 53px;
		font-size: 39px;
		line-height: 50px;
	}

	hr {
		width: 2px;
		height: 36px;
		margin-left: auto;
		margin-right: 17px;
		border: 0;
		background: #d9803f;
	}
`;

const InfoTabs = styled.nav`
	height: 106px;
	padding-left: 28px;
	border-top: 2px solid #dcdcdc;
	border-bottom: 2px solid #dcdcdc;
	display: flex;
	align-items: center;
	flex-shrink: 0;
`;

const Cards = styled.section`
	height: 126px;
	padding: 11px 28px 0 36px;
	display: flex;
	gap: 18px;
	overflow: hidden;
	flex-shrink: 0;
`;

const Card = styled.article`
	width: 499px;
	height: 200px;
	padding: 28px 24px 0;
	border-radius: 28px;
	background: #fff8f5;
	overflow: hidden;
	position: relative;
`;

const Decor = styled.svg`
	position: absolute;
	top: 0;
	left: 0;
`;

const CardTitle = styled.div`
	height: 52px;
	display: flex;
	align-items: center;
	position: relative;

	h2 {
		margin: 1px 14px 0;
		font-size: 41px;
		font-weight: 700;
	}
`;

const Rank = styled.div`
	margin: 22px 0 0 3px;
	font-size: 35.5px;
	line-height: 44px;
	color: ${GREY};
	position: relative;

	b {
		color: #d9501a;
	}
`;

const Versus = styled.div`
	height: 40px;
	margin: 25px 3px 0;
	border-radius: 12px;
	overflow: hidden;
	display: flex;
	position: relative;

	span {
		width: 232px;
		background: #ff6458;
		clip-path: polygon(0 0, 100% 0, calc(100% - 9px) 100%, 0 100%);
	}

	span + span {
		flex: 1;
		margin-left: -5px;
		background: #3fbb63;
		clip-path: polygon(9px 0, 100% 0, 100% 100%, 0 100%);
	}
`;

const BottomNav = styled.nav`
	height: 177px;
	border-top: 2px solid #d3d6d9;
	background: #f7f8fa;
	display: grid;
	grid-template-columns: 276px repeat(4, 201px);
	flex-shrink: 0;
`;

const IndexBox = styled.div`
	padding-top: 8px;
	display: flex;
	flex-direction: column;
	align-items: center;

	strong {
		margin-top: 9px;
		font-size: 39.5px;
		font-weight: 400;
		line-height: 50px;
		letter-spacing: -0.6px;
		color: ${RED};
	}

	div {
		width: 223px;
		margin-left: 28px;
		display: flex;
		justify-content: space-between;
		font-size: 35px;
		line-height: 50px;
		color: ${GREY};
	}

	em {
		font-size: 37px;
		color: ${RED};
	}
`;

const NavItem = styled.div`
	padding-top: 8px;
	display: flex;
	flex-direction: column;
	align-items: center;
	gap: 12px;
	font-size: 34.5px;
	line-height: 50px;
	color: ${GREY};
`;
